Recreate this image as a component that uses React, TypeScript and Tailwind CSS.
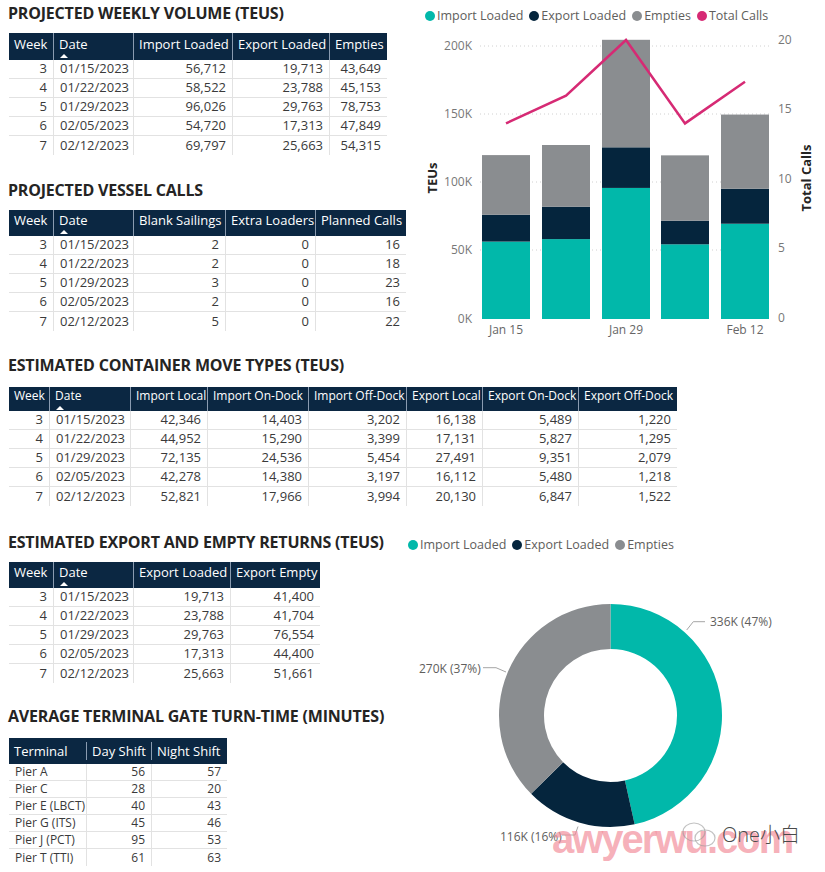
import React from "react";

type Col = { label: string; w: string; align: "l" | "r"; sort?: boolean };

function Table({
  cols,
  rows,
  headH,
  headPad,
  headSize,
  rowH,
  bodySize,
}: {
  cols: Col[];
  rows: (string | number)[][];
  headH: string;
  headPad: string;
  headSize: string;
  rowH: string;
  bodySize: string;
}) {
  return (
    <div className="ml-[1px] flex flex-col w-max">
      <div className={`flex bg-[#0b2742] text-white leading-[18px] ${headSize} ${headH}`}>
        {cols.map((c, i) => (
          <div
            key={i}
            className={`${c.w} flex flex-col items-start pl-[5px] ${headPad} ${i > 0 ? "border-l border-[#8a9bb0]" : ""} whitespace-nowrap overflow-hidden`}
          >
            <span>{c.label}</span>
            {c.sort && (
              <svg width="8" height="4" viewBox="0 0 8 4" className="mt-[1px] ml-[1px]">
                <polygon points="0,4 4,0 8,4" fill="#ffffff" />
              </svg>
            )}
          </div>
        ))}
      </div>
      {rows.map((r, ri) => (
        <div
          key={ri}
          className={`flex text-[#3a3a3a] ${bodySize} ${rowH} ${ri < rows.length - 1 ? "border-b border-[#e2e2e2]" : ""}`}
        >
          {r.map((v, ci) => (
            <div
              key={ci}
              className={`${cols[ci].w} flex items-center whitespace-nowrap ${
                cols[ci].align === "r" ? "justify-end pr-[6px]" : "justify-start pl-[6px]"
              } ${ci > 0 ? "border-l border-[#e2e2e2]" : ""}`}
            >
              {v}
            </div>
          ))}
        </div>
      ))}
    </div>
  );
}

function Title({ children }: { children: React.ReactNode }) {
  return (
    <div className="h-[20px] leading-[20px] text-[16px] font-bold text-[#252423] whitespace-nowrap tracking-[-0.2px]">
      {children}
    </div>
  );
}

const dates = ["01/15/2023", "01/22/2023", "01/29/2023", "02/05/2023", "02/12/2023"];

const t1: Col[] = [
  { label: "Week", w: "w-[44px]", align: "r" },
  { label: "Date", w: "w-[80px]", align: "l", sort: true },
  { label: "Import Loaded", w: "w-[99px]", align: "r" },
  { label: "Export Loaded", w: "w-[97px]", align: "r" },
  { label: "Empties", w: "w-[58px]", align: "r" },
];
const t1rows = [
  [3, dates[0], "56,712", "19,713", "43,649"],
  [4, dates[1], "58,522", "23,788", "45,153"],
  [5, dates[2], "96,026", "29,763", "78,753"],
  [6, dates[3], "54,720", "17,313", "47,849"],
  [7, dates[4], "69,797", "25,663", "54,315"],
];

const t2: Col[] = [
  { label: "Week", w: "w-[44px]", align: "r" },
  { label: "Date", w: "w-[80px]", align: "l", sort: true },
  { label: "Blank Sailings", w: "w-[92px]", align: "r" },
  { label: "Extra Loaders", w: "w-[90px]", align: "r" },
  { label: "Planned Calls", w: "w-[91px]", align: "r" },
];
const t2rows = [
  [3, dates[0], 2, 0, 16],
  [4, dates[1], 2, 0, 18],
  [5, dates[2], 3, 0, 23],
  [6, dates[3], 2, 0, 16],
  [7, dates[4], 5, 0, 22],
];

const t3: Col[] = [
  { label: "Week", w: "w-[40px]", align: "r" },
  { label: "Date", w: "w-[81px]", align: "l", sort: true },
  { label: "Import Local", w: "w-[77px]", align: "r" },
  { label: "Import On-Dock", w: "w-[101px]", align: "r" },
  { label: "Import Off-Dock", w: "w-[98px]", align: "r" },
  { label: "Export Local", w: "w-[76px]", align: "r" },
  { label: "Export On-Dock", w: "w-[96px]", align: "r" },
  { label: "Export Off-Dock", w: "w-[99px]", align: "r" },
];
const t3rows = [
  [3, dates[0], "42,346", "14,403", "3,202", "16,138", "5,489", "1,220"],
  [4, dates[1], "44,952", "15,290", "3,399", "17,131", "5,827", "1,295"],
  [5, dates[2], "72,135", "24,536", "5,454", "27,491", "9,351", "2,079"],
  [6, dates[3], "42,278", "14,380", "3,197", "16,112", "5,480", "1,218"],
  [7, dates[4], "52,821", "17,966", "3,994", "20,130", "6,847", "1,522"],
];

const t4: Col[] = [
  { label: "Week", w: "w-[44px]", align: "r" },
  { label: "Date", w: "w-[80px]", align: "l", sort: true },
  { label: "Export Loaded", w: "w-[97px]", align: "r" },
  { label: "Export Empty", w: "w-[90px]", align: "r" },
];
const t4rows = [
  [3, dates[0], "19,713", "41,400"],
  [4, dates[1], "23,788", "41,704"],
  [5, dates[2], "29,763", "76,554"],
  [6, dates[3], "17,313", "44,400"],
  [7, dates[4], "25,663", "51,661"],
];

const t5: Col[] = [
  { label: "Terminal", w: "w-[77px]", align: "l" },
  { label: "Day Shift", w: "w-[65px]", align: "r" },
  { label: "Night Shift", w: "w-[76px]", align: "r" },
];
const t5rows = [
  ["Pier A", 56, 57],
  ["Pier C", 28, 20],
  ["Pier E (LBCT)", 40, 43],
  ["Pier G (ITS)", 45, 46],
  ["Pier J (PCT)", 95, 53],
  ["Pier T (TTI)", 61, 63],
];

const TEAL = "#01b8aa";
const DARK = "#05253d";
const GRAY = "#8a8d90";
const PINK = "#d62a74";

function Legend({ items }: { items: { c: string; t: string }[] }) {
  return (
    <div className="flex items-center gap-[6px] text-[12.5px] text-[#605e5c] leading-[18px]">
      {items.map((it) => (
        <div key={it.t} className="flex items-center gap-[2px]">
          <span className={`inline-block w-[10px] h-[10px] rounded-full ${it.c}`} />
          <span className="whitespace-nowrap">{it.t}</span>
        </div>
      ))}
    </div>
  );
}

function BarChart() {
  const data = [
    [56712, 19713, 43649],
    [58522, 23788, 45153],
    [96026, 29763, 78753],
    [54720, 17313, 47849],
    [69797, 25663, 54315],
  ];
  const xs = [482, 542, 602, 661, 721];
  const base = 319;
  const k = 273 / 200000;
  const calls = [14, 16, 20, 14, 17];
  const ck = 278 / 20;
  const pts = calls.map((c, i) => `${xs[i] + 24},${318 - c * ck}`).join(" ");
  const leftTicks = [
    ["200K", 46],
    ["150K", 114],
    ["100K", 182],
    ["50K", 250],
    ["0K", 319],
  ] as const;
  const rightTicks = [
    ["20", 40],
    ["15", 109],
    ["10", 179],
    ["5", 248],
    ["0", 318],
  ] as const;
  return (
    <svg width="415" height="308" viewBox="410 32 415 308" className="block">
      {leftTicks.slice(0, 4).map(([, y]) => (
        <line key={y} x1={480} x2={772} y1={y} y2={y} stroke="#d0d0d0" strokeWidth="1" strokeDasharray="1 3" />
      ))}
      {leftTicks.map(([t, y]) => (
        <text key={t} x={472} y={y + 4} fontSize="12" fill="#777" textAnchor="end">
          {t}
        </text>
      ))}
      {rightTicks.map(([t, y]) => (
        <text key={t} x={778} y={y + 4} fontSize="12" fill="#777">
          {t}
        </text>
      ))}
      {data.map(([a, b, c], i) => {
        const ha = a * k;
        const hb = b * k;
        const hc = c * k;
        return (
          <g key={i}>
            <rect x={xs[i]} y={base - ha} width={48} height={ha} fill={TEAL} />
            <rect x={xs[i]} y={base - ha - hb} width={48} height={hb} fill={DARK} />
            <rect x={xs[i]} y={base - ha - hb - hc} width={48} height={hc} fill={GRAY} />
          </g>
        );
      })}
      <polyline points={pts} fill="none" stroke={PINK} strokeWidth="2.5" strokeLinejoin="miter" />
      <text x={506} y={334} fontSize="12" fill="#666" textAnchor="middle">Jan 15</text>
      <text x={626} y={334} fontSize="12" fill="#666" textAnchor="middle">Jan 29</text>
      <text x={745} y={334} fontSize="12" fill="#666" textAnchor="middle">Feb 12</text>
      <text x={437} y={178} fontSize="13" fontWeight="700" fill="#252423" textAnchor="middle" transform="rotate(-90 437 178)">
        TEUs
      </text>
      <text x={811} y={178} fontSize="13" fontWeight="700" fill="#252423" textAnchor="middle" transform="rotate(-90 811 178)">
        Total Calls
      </text>
    </svg>
  );
}

function arcPath(cx: number, cy: number, r0: number, r1: number, a0: number, a1: number) {
  const rad = (a: number) => (a * Math.PI) / 180;
  const p = (r: number, a: number) => [cx + r * Math.sin(rad(a)), cy - r * Math.cos(rad(a))];
  const large = a1 - a0 > 180 ? 1 : 0;
  const [ox0, oy0] = p(r1, a0);
  const [ox1, oy1] = p(r1, a1);
  const [ix1, iy1] = p(r0, a1);
  const [ix0, iy0] = p(r0, a0);
  return `M${ox0},${oy0} A${r1},${r1} 0 ${large} 1 ${ox1},${oy1} L${ix1},${iy1} A${r0},${r0} 0 ${large} 0 ${ix0},${iy0} Z`;
}

function Donut() {
  const cx = 610.5;
  const cy = 715.5;
  const a1 = 167.5;
  const a2 = 225.4;
  return (
    <svg width="425" height="315" viewBox="400 557 425 315" className="block">
      <path d={arcPath(cx, cy, 66.5, 111.5, 0, a1)} fill={TEAL} />
      <path d={arcPath(cx, cy, 66.5, 111.5, a1, a2)} fill={DARK} />
      <path d={arcPath(cx, cy, 66.5, 111.5, a2, 360)} fill={GRAY} />
      <polyline points="686.7,630 693.3,621.7 705,621.7" fill="none" stroke="#a6a6a6" strokeWidth="1" />
      <text x={710} y={626} fontSize="12" fill="#605e5c">336K (47%)</text>
      <polyline points="483,667.7 496,667.7 506,672" fill="none" stroke="#a6a6a6" strokeWidth="1" />
      <text x={419} y={672.5} fontSize="12" fill="#605e5c">270K (37%)</text>
      <polyline points="578,826.5 575,835 562,835" fill="none" stroke="#a6a6a6" strokeWidth="1" />
      <text x={500} y={841} fontSize="12" fill="#605e5c">116K (16%)</text>
    </svg>
  );
}

export default function App() {
  return (
    <div className="relative w-[825px] h-[872px] overflow-hidden bg-white font-['Open_Sans',sans-serif]">
      {/* Row A */}
      <div className="flex h-[340px]">
        <div className="w-[410px] pl-[8px] pt-[3px] flex flex-col">
          <Title>PROJECTED WEEKLY VOLUME (TEUS)</Title>
          <div className="mt-[10px]">
            <Table cols={t1} rows={t1rows} headH="h-[27px]" headPad="pt-[2px]" headSize="text-[13px]" rowH="h-[19px]" bodySize="text-[13px]" />
          </div>
          <div className="mt-[25px]">
            <Title>PROJECTED VESSEL CALLS</Title>
          </div>
          <div className="mt-[10px]">
            <Table cols={t2} rows={t2rows} headH="h-[26px]" headPad="pt-[1px]" headSize="text-[13px]" rowH="h-[19px]" bodySize="text-[13px]" />
          </div>
        </div>
        <div className="w-[415px] flex flex-col">
          <div className="h-[32px] pl-[15px] flex items-center">
            <Legend
              items={[
                { c: "bg-[#01b8aa]", t: "Import Loaded" },
                { c: "bg-[#05253d]", t: "Export Loaded" },
                { c: "bg-[#8a8d90]", t: "Empties" },
                { c: "bg-[#d62a74]", t: "Total Calls" },
              ]}
            />
          </div>
          <BarChart />
        </div>
      </div>

      {/* Row B */}
      <div className="h-[180px] pl-[8px] pt-[15px] flex flex-col">
        <Title>ESTIMATED CONTAINER MOVE TYPES (TEUS)</Title>
        <div className="mt-[12px]">
          <Table cols={t3} rows={t3rows} headH="h-[24px]" headPad="pt-0" headSize="text-[12px]" rowH="h-[19px]" bodySize="text-[13px]" />
        </div>
      </div>

      {/* Row C */}
      <div className="flex h-[352px]">
        <div className="w-[400px] pl-[8px] pt-[12px] flex flex-col">
          <Title>ESTIMATED EXPORT AND EMPTY RETURNS (TEUS)</Title>
          <div className="mt-[10px]">
            <Table cols={t4} rows={t4rows} headH="h-[26px]" headPad="pt-[1px]" headSize="text-[13px]" rowH="h-[19px]" bodySize="text-[13px]" />
          </div>
          <div className="mt-[23px]">
            <Title>AVERAGE TERMINAL GATE TURN-TIME (MINUTES)</Title>
          </div>
          <div className="mt-[12px]">
            <Table cols={t5} rows={t5rows} headH="h-[26px] items-center" headPad="justify-center" headSize="text-[13px]" rowH="h-[17px]" bodySize="text-[12px]" />
          </div>
        </div>
        <div className="w-[425px] flex flex-col">
          <div className="h-[37px] pl-[8px] pt-[13px] flex items-center">
            <Legend
              items={[
                { c: "bg-[#01b8aa]", t: "Import Loaded" },
                { c: "bg-[#05253d]", t: "Export Loaded" },
                { c: "bg-[#8a8d90]", t: "Empties" },
              ]}
            />
          </div>
          <Donut />
        </div>
      </div>

      {/* watermark */}
      <div className="absolute left-[552px] top-[819px] h-[40px] leading-[40px] text-[40px] font-extrabold tracking-[-2px] text-[#f28e9b]/70 font-['Liberation_Sans',sans-serif] whitespace-nowrap pointer-events-none">
        awyerwu.com
      </div>
      <svg className="absolute left-[680px] top-[820px] pointer-events-none" width="40" height="30" viewBox="0 0 40 30">
        <ellipse cx="14" cy="12" rx="11" ry="9" fill="none" stroke="#9a9a9a" strokeWidth="1.2" opacity="0.6" />
        <ellipse cx="25" cy="18" rx="10" ry="8" fill="none" stroke="#9a9a9a" strokeWidth="1.2" opacity="0.6" />
      </svg>
      <div className="absolute left-[722px] top-[822px] h-[26px] leading-[26px] text-[20px] font-light text-[#4a4a4a] font-['Open_Sans','Noto_Sans_CJK_SC',sans-serif] whitespace-nowrap pointer-events-none">
        One小白
      </div>
    </div>
  );
}
